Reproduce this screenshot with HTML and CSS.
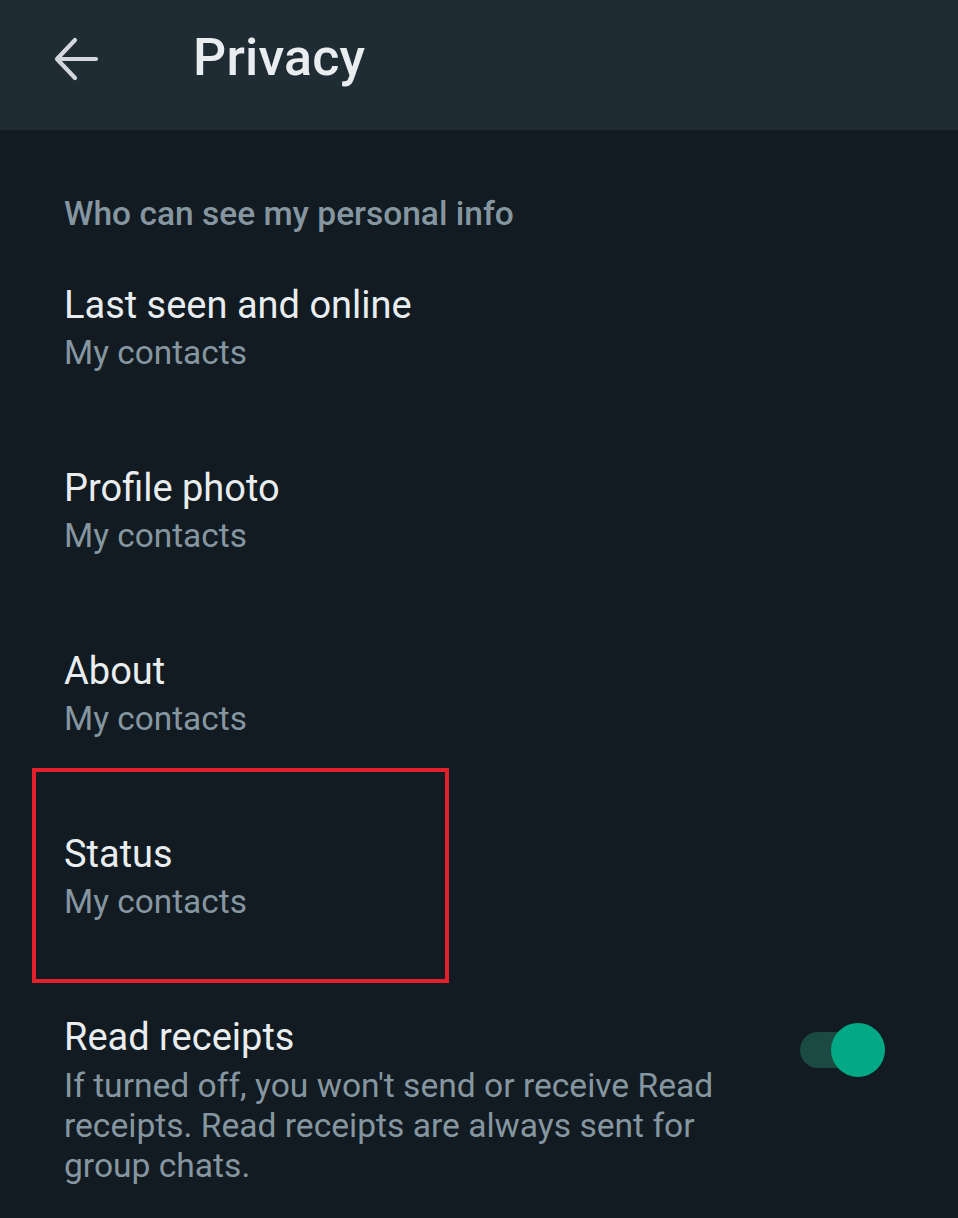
FILE: index.html
```html
<!DOCTYPE html>
<html lang="en">
<head>
<meta charset="utf-8">
<title>Privacy</title>
<link rel="stylesheet" href="styles.css">
</head>
<body>
<header class="appbar">
  <svg class="back" width="48" height="48" viewBox="0 0 48 48" aria-hidden="true">
    <path d="M45 24H7M24 5L6 24l18 19" fill="none" stroke="#d1d7db" stroke-width="4.2" stroke-linecap="round" stroke-linejoin="round"/>
  </svg>
  <h1 class="title">Privacy</h1>
</header>
<main class="content">
  <div class="section-title">Who can see my personal info</div>
  <div class="row">
    <div class="row-title">Last seen and online</div>
    <div class="row-sub">My contacts</div>
  </div>
  <div class="row">
    <div class="row-title">Profile photo</div>
    <div class="row-sub">My contacts</div>
  </div>
  <div class="row">
    <div class="row-title">About</div>
    <div class="row-sub">My contacts</div>
  </div>
  <div class="row row-highlight">
    <div class="row-title">Status</div>
    <div class="row-sub">My contacts</div>
  </div>
  <div class="row row-toggle">
    <div class="row-text">
      <div class="row-title">Read receipts</div>
      <div class="row-desc">If turned off, you won't send or receive Read receipts. Read receipts are always sent for group chats.</div>
    </div>
    <div class="toggle">
      <span class="track"></span>
      <span class="knob"></span>
    </div>
  </div>
</main>
</body>
</html>
```
FILE: styles.css
```css
html, body {
  margin: 0;
  padding: 0;
}
body {
  background: #111b21;
  font-family: Roboto, "Noto Sans", "Liberation Sans", sans-serif;
  color: #e9edef;
  width: 958px;
  min-height: 1218px;
  overflow: hidden;
}
.appbar {
  height: 130px;
  background: #202c33;
  display: flex;
  align-items: center;
  padding-left: 51px;
  box-sizing: border-box;
}
.back {
  display: block;
  margin-top: -12px;
}
.title {
  margin: 0 0 0 94px;
  font-size: 52px;
  font-weight: 500;
  color: #e9edef;
  line-height: 60px;
  margin-top: -14px;
  letter-spacing: 0.2px;
}
.content {
  padding: 64px 73px 0 64px;
}
.section-title {
  font-size: 33.5px;
  font-weight: 500;
  line-height: 40px;
  color: #8696a0;
  height: 40px;
}
.row {
  padding: 47px 0 40px;
}
.row-title {
  font-size: 38px;
  line-height: 48px;
  color: #e9edef;
}
.row-sub {
  font-size: 33.4px;
  line-height: 48px;
  color: #8696a0;
}
.row-highlight {
  position: relative;
}
.row-highlight::after {
  content: "";
  position: absolute;
  left: -32px;
  top: -15px;
  width: 417px;
  height: 215px;
  border: 4px solid #e3202b;
  box-sizing: border-box;
}
.row-toggle {
  display: flex;
  justify-content: space-between;
  align-items: flex-start;
}
.row-text {
  width: 680px;
}
.row-desc {
  margin-top: 5px;
  font-size: 33.6px;
  line-height: 40px;
  color: #8696a0;
}
.toggle {
  display: flex;
  align-items: center;
  margin-top: 10px;
  flex-shrink: 0;
}
.track {
  display: block;
  width: 60px;
  height: 36px;
  border-radius: 18px;
  background: #1b4a42;
}
.knob {
  display: block;
  width: 54px;
  height: 54px;
  border-radius: 50%;
  background: #03a884;
  margin-left: -29px;
}
```
